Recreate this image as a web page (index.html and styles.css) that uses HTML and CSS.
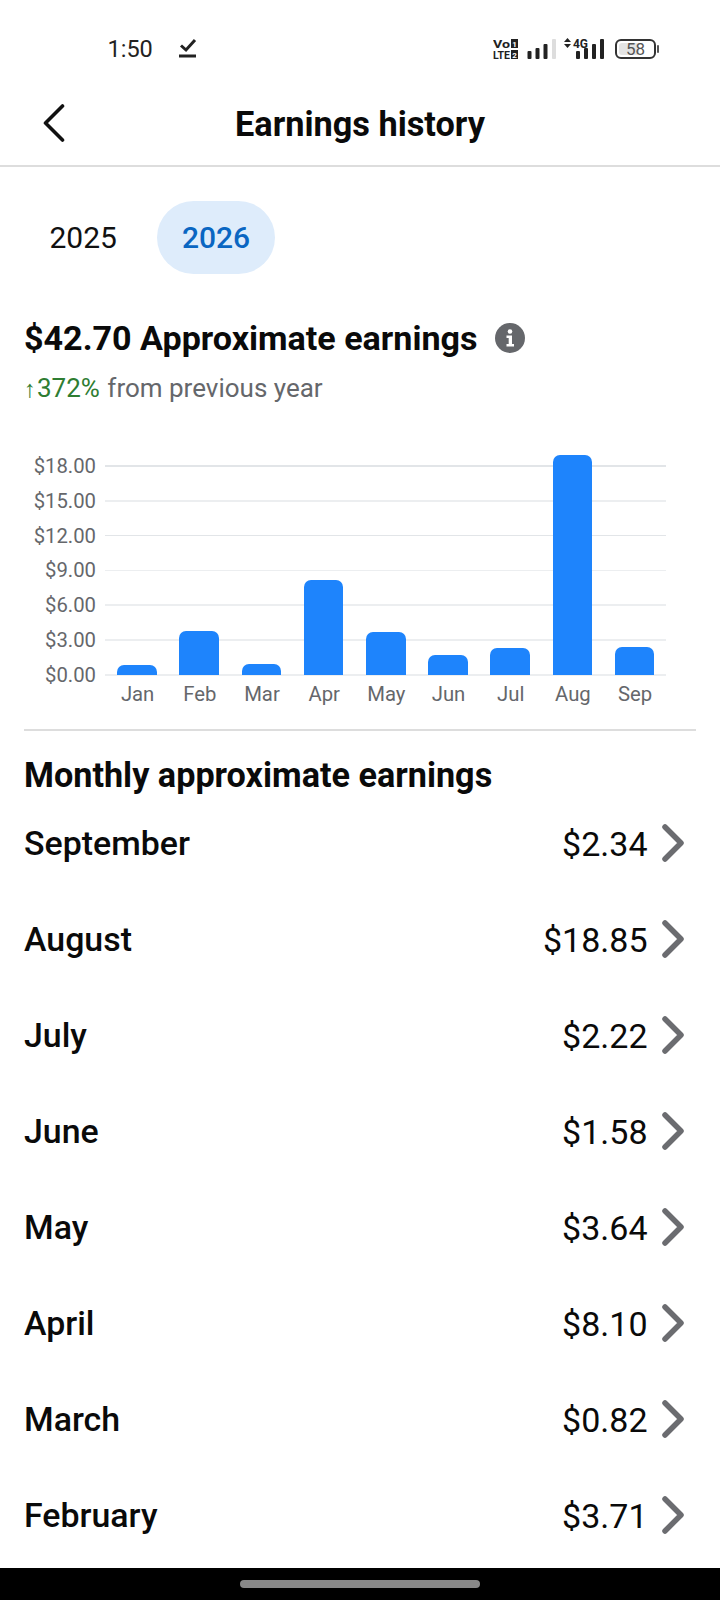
FILE: index.html
```html
<!DOCTYPE html>
<html>

<head>
    <title>Earnings history</title>
    <link rel="stylesheet" href="styles.css">
</head>

<body>
    <div class="status-bar">
        <span class="time">1:50</span>
        <svg class="check-icon" viewBox="0 0 18 20" width="18" height="20">
            <path d="M2 7.5 L7 12 L16 2" fill="none" stroke="#222" stroke-width="3" />
            <rect x="0" y="16.5" width="17" height="3" fill="#222" />
        </svg>
        <svg class="status-icons" viewBox="493 34 167 26" width="167" height="26">
            <text x="493" y="46.6" class="tiny" textLength="17" lengthAdjust="spacingAndGlyphs">Vo</text>
            <rect x="511" y="38" width="7" height="9" fill="#222" />
            <text x="514.5" y="46" class="chip" text-anchor="middle">1</text>
            <text x="493" y="57.8" class="tiny" textLength="17" lengthAdjust="spacingAndGlyphs">LTE</text>
            <rect x="511" y="49" width="7" height="9" fill="#222" />
            <text x="514.5" y="57" class="chip" text-anchor="middle">2</text>

            <rect x="527.5" y="50" width="4" height="8" rx="1" fill="#222" />
            <rect x="535.5" y="47" width="4" height="11" rx="1" fill="#222" />
            <rect x="543.5" y="43" width="4" height="15" rx="1" fill="#222" />
            <rect x="552" y="38" width="4" height="20" rx="1" fill="#ddd" />

            <path d="M564 41 L567.5 37 L571 41 Z M564 43 L571 43 L567.5 47 Z" fill="#222" />
            <text x="573" y="47" class="tiny-4g" textLength="15" lengthAdjust="spacingAndGlyphs">4G</text>
            <rect x="576" y="50" width="4" height="8" rx="1" fill="#222" />
            <rect x="584" y="47" width="4" height="11" rx="1" fill="#222" />
            <rect x="592" y="43" width="4" height="15" rx="1" fill="#222" />
            <rect x="600" y="38" width="4" height="20" rx="1" fill="#222" />

            <rect x="616" y="39" width="39" height="18" rx="5" fill="#fff" stroke="#333" stroke-width="2" />
            <rect x="619" y="42" width="20" height="12" rx="3" fill="#e4e4e4" />
            <rect x="657" y="44" width="2" height="8" rx="1" fill="#555" />
            <text x="635.5" y="54" class="battery-level" text-anchor="middle">58</text>
        </svg>
    </div>

    <div class="header">
        <svg class="back-icon" viewBox="0 0 22 38" width="22" height="38">
            <path d="M19.5 2 L2.5 19 L19.5 36" fill="none" stroke="#111" stroke-width="3.6" stroke-linecap="round" stroke-linejoin="round" />
        </svg>
        <h1 class="title">Earnings history</h1>
    </div>

    <div class="tabs">
        <div class="tab">2025</div>
        <div class="tab active">2026</div>
    </div>

    <h2 class="summary">
        $42.70 Approximate earnings
        <svg class="info-icon" viewBox="0 0 30 30" width="30" height="30">
            <circle cx="15" cy="15" r="15" fill="#65676b" />
            <circle cx="15" cy="8.5" r="2.3" fill="#fff" />
            <path d="M11.5 12.5 H17 V21 H19 V23.5 H11.5 V21 H13.7 V15 H11.5 Z" fill="#fff" />
        </svg>
    </h2>
    <p class="change"><span class="up"><span class="arrow">↑</span>372%</span> from previous year</p>

    <div class="chart">
        <div class="plot">
            <div class="grid-row"><span class="y-label">$18.00</span><span class="grid-line"></span></div>
            <div class="grid-row"><span class="y-label">$15.00</span><span class="grid-line light"></span></div>
            <div class="grid-row"><span class="y-label">$12.00</span><span class="grid-line"></span></div>
            <div class="grid-row"><span class="y-label">$9.00</span><span class="grid-line light"></span></div>
            <div class="grid-row"><span class="y-label">$6.00</span><span class="grid-line light"></span></div>
            <div class="grid-row"><span class="y-label">$3.00</span><span class="grid-line light"></span></div>
            <div class="grid-row"><span class="y-label">$0.00</span><span class="grid-line light"></span></div>
            <div class="bars">
                <div class="bar" style="height: 10px"></div>
                <div class="bar" style="height: 44px"></div>
                <div class="bar" style="height: 11px"></div>
                <div class="bar" style="height: 95px"></div>
                <div class="bar" style="height: 43px"></div>
                <div class="bar" style="height: 20px"></div>
                <div class="bar" style="height: 27px"></div>
                <div class="bar" style="height: 220px"></div>
                <div class="bar" style="height: 28px"></div>
            </div>
        </div>
        <div class="months">
            <span>Jan</span><span>Feb</span><span>Mar</span><span>Apr</span><span>May</span><span>Jun</span><span>Jul</span><span>Aug</span><span>Sep</span>
        </div>
    </div>

    <div class="divider"></div>

    <h2 class="section-title">Monthly approximate earnings</h2>

    <div class="rows">
        <div class="row"><span class="month">September</span><span class="value">$2.34</span><svg class="chevron" viewBox="0 0 22 38" width="22" height="38"><path d="M3 3 L19 19 L3 35" /></svg></div>
        <div class="row"><span class="month">August</span><span class="value">$18.85</span><svg class="chevron" viewBox="0 0 22 38" width="22" height="38"><path d="M3 3 L19 19 L3 35" /></svg></div>
        <div class="row"><span class="month">July</span><span class="value">$2.22</span><svg class="chevron" viewBox="0 0 22 38" width="22" height="38"><path d="M3 3 L19 19 L3 35" /></svg></div>
        <div class="row"><span class="month">June</span><span class="value">$1.58</span><svg class="chevron" viewBox="0 0 22 38" width="22" height="38"><path d="M3 3 L19 19 L3 35" /></svg></div>
        <div class="row"><span class="month">May</span><span class="value">$3.64</span><svg class="chevron" viewBox="0 0 22 38" width="22" height="38"><path d="M3 3 L19 19 L3 35" /></svg></div>
        <div class="row"><span class="month">April</span><span class="value">$8.10</span><svg class="chevron" viewBox="0 0 22 38" width="22" height="38"><path d="M3 3 L19 19 L3 35" /></svg></div>
        <div class="row"><span class="month">March</span><span class="value">$0.82</span><svg class="chevron" viewBox="0 0 22 38" width="22" height="38"><path d="M3 3 L19 19 L3 35" /></svg></div>
        <div class="row"><span class="month">February</span><span class="value">$3.71</span><svg class="chevron" viewBox="0 0 22 38" width="22" height="38"><path d="M3 3 L19 19 L3 35" /></svg></div>
    </div>

    <div class="nav-bar">
        <div class="nav-pill"></div>
    </div>
</body>

</html>
```

FILE: styles.css
```css
html,
body {
    margin: 0;
    padding: 0;
}

body {
    width: 720px;
    height: 1600px;
    overflow: hidden;
    display: flex;
    flex-direction: column;
    background-color: #fff;
    color: #0a0a0a;
    font-family: Roboto, "Liberation Sans", sans-serif;
}

h1,
h2,
p {
    margin: 0;
}

/* status bar */
.status-bar {
    height: 96px;
    display: flex;
    align-items: center;
    padding: 0 60px 0 107.5px;
    box-sizing: border-box;
}

.time {
    margin-top: 2px;
    font-size: 23.5px;
    color: #222;
}

.check-icon {
    margin-left: 26px;
}

.status-icons {
    margin-left: auto;
}

.tiny {
    font-family: Roboto, sans-serif;
    font-size: 11px;
    font-weight: 700;
    fill: #222;
}

.tiny-4g {
    font-family: Roboto, sans-serif;
    font-size: 13px;
    font-weight: 700;
    fill: #222;
}

.chip {
    font-family: Roboto, sans-serif;
    font-size: 8px;
    font-weight: 700;
    fill: #fff;
}

.battery-level {
    font-family: Roboto, sans-serif;
    font-size: 17px;
    fill: #555;
}

/* header */
.header {
    height: 71px;
    padding-bottom: 14px;
    box-sizing: border-box;
    display: flex;
    align-items: center;
    position: relative;
    justify-content: center;
    border-bottom: 2px solid #ddd;
}

.back-icon {
    position: absolute;
    left: 43px;
    top: 8px;
}

.title {
    font-size: 34.3px;
    font-weight: 700;
}

/* year tabs */
.tabs {
    display: flex;
    gap: 16px;
    padding: 34px 25px 0;
}

.tab {
    height: 73px;
    line-height: 74px;
    padding: 0 24.5px;
    border-radius: 37px;
    font-size: 30px;
    color: #111;
}

.tab.active {
    background-color: #deecfb;
    color: #0a66c2;
    font-weight: 500;
}

/* summary */
.summary {
    margin-top: 44px;
    padding-left: 24px;
    font-size: 34.1px;
    font-weight: 700;
    line-height: 40px;
    display: flex;
    align-items: center;
    gap: 17px;
}

.change {
    margin-top: 13px;
    padding-left: 24px;
    font-size: 26px;
    line-height: 34px;
    color: #65676b;
}

.up {
    margin-right: 1px;
    color: #2e7d32;
}

.arrow {
    margin-right: 1px;
    font-size: 24px;
}

/* chart */
.chart {
    margin-top: 59px;
}

.plot {
    position: relative;
    display: flex;
    flex-direction: column;
    gap: 32.8px;
    padding-right: 54px;
}

.grid-row {
    height: 2px;
    display: flex;
    align-items: center;
}

.y-label {
    width: 96px;
    margin-right: 9px;
    text-align: right;
    font-size: 20.3px;
    color: #65676b;
}

.grid-line {
    flex: 1;
    height: 1.5px;
    background-color: #e2e5e8;
}

.grid-line.light {
    background-color: #eceef0;
}

.bars {
    position: absolute;
    left: 117.3px;
    bottom: 1px;
    display: flex;
    align-items: flex-end;
    gap: 22.7px;
}

.bar {
    width: 39.5px;
    border-radius: 7px 7px 0 0;
    background-color: #1e84fc;
}

.months {
    display: flex;
    margin-top: 6px;
    padding-left: 106.5px;
    font-size: 20.3px;
    line-height: 24px;
    color: #65676b;
}

.months span {
    width: 62.2px;
    text-align: center;
}

.divider {
    height: 2px;
    margin: 23px 24px 0;
    background-color: #ddd;
}

/* monthly list */
.section-title {
    margin-top: 24px;
    margin-bottom: 1px;
    padding-left: 24px;
    font-size: 34.2px;
    font-weight: 700;
    line-height: 40px;
}

.rows {
    flex: 1;
}

.row {
    height: 96px;
    display: flex;
    align-items: center;
    padding: 0 36px 0 24px;
}

.month {
    flex: 1;
    font-size: 33.9px;
    font-weight: 500;
}

.value {
    font-size: 34px;
}

.chevron {
    margin-left: 14.5px;
    margin-bottom: 2px;
}

.chevron path {
    fill: none;
    stroke: #6b6c70;
    stroke-width: 5.5;
    stroke-linecap: round;
    stroke-linejoin: round;
}

/* bottom nav */
.nav-bar {
    flex-shrink: 0;
    height: 32px;
    background-color: #000;
    display: flex;
    align-items: center;
    justify-content: center;
}

.nav-pill {
    width: 240px;
    height: 8px;
    border-radius: 4px;
    background-color: #888;
}
```
